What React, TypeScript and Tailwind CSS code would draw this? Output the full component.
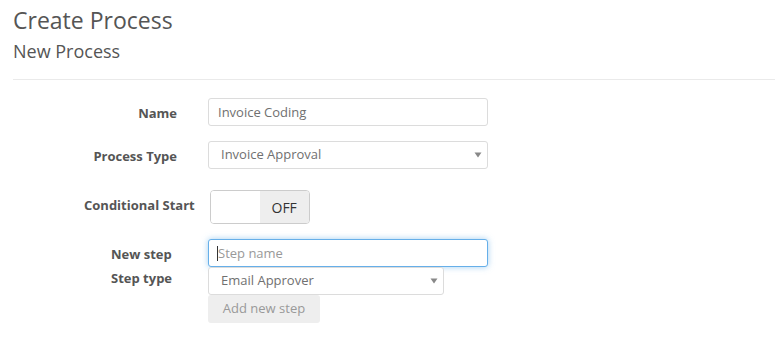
import type { ReactNode } from 'react';

function Caret() {
  return (
    <svg
      className="pointer-events-none absolute right-[6px] top-1/2 -translate-y-1/2"
      width="8"
      height="6"
      viewBox="0 0 8 6"
    >
      <path d="M0.5 0.5h7L4 5.5z" fill="#888" />
    </svg>
  );
}

function Select({ value, width }: { value: string; width: string }) {
  return (
    <div className={`relative ${width}`}>
      <select
        defaultValue={value}
        className="h-[28px] w-full appearance-none rounded-[3px] border border-[#dcdcdc] bg-white pl-[12px] pr-6 text-[13px] text-[#707070] outline-none"
      >
        <option>{value}</option>
      </select>
      <Caret />
    </div>
  );
}

function Row({ label, children, className = '' }: { label: ReactNode; children: ReactNode; className?: string }) {
  return (
    <div className={`flex items-center ${className}`}>
      <div className="w-[164px] pt-[3px] text-right text-[13px] font-bold text-[#555]">{label}</div>
      <div className="ml-[31px]">{children}</div>
    </div>
  );
}

export default function App() {
  return (
    <div className="min-h-[360px] bg-white pl-[13px] font-['Open_Sans',sans-serif] text-[#555]">
      <h1 className="pt-[6px] text-[23px] leading-[28px] text-[#555]">Create Process</h1>
      <h2 className="mt-[6px] text-[18px] leading-[22px] text-[#555]">New Process</h2>
      <div className="mt-[17px] border-t border-[#eaeaea]" />

      <div className="pt-[18px]">
        <Row label="Name">
          <input
            defaultValue="Invoice Coding"
            className="h-[28px] w-[280px] rounded-[3px] border border-[#dcdcdc] bg-white pl-[9px] text-[13px] text-[#707070] outline-none"
          />
        </Row>

        <Row label="Process Type" className="mt-[15px]">
          <Select value="Invoice Approval" width="w-[280px]" />
        </Row>

        <div className="mt-[21px] flex items-start">
          <div className="ml-[71px] pt-[6px] text-[13px] font-bold text-[#555]">Conditional Start</div>
          <div className="ml-[15px] flex h-[34px] w-[100px] overflow-hidden rounded-[4px] border border-[#ccc]">
            <div className="w-[49px] bg-white" />
            <div className="flex flex-1 items-center justify-center bg-[#eee] text-[14px] text-[#333]">OFF</div>
          </div>
        </div>

        <div className="mt-[15px] flex">
          <div className="ml-[98px] w-[97px] pt-[3px] text-[13px] font-bold leading-[24px] text-[#555]">
            <div>New step</div>
            <div>Step type</div>
          </div>
          <div className="flex flex-col items-start">
            <div className="relative">
              <input
                placeholder="Step name"
                className="h-[28px] w-[280px] rounded-[3px] border border-[#66afe9] bg-white pl-[9px] text-[13px] text-[#666] shadow-[0_0_6px_rgba(102,175,233,0.6)] outline-none placeholder:text-[#999]"
              />
              <span className="absolute left-[9px] top-[7px] h-[15px] w-px bg-[#333]" />
            </div>
            <Select value="Email Approver" width="w-[236px]" />
            <button className="h-[28px] w-[112px] rounded-[3px] bg-[#eee] text-[13px] text-[#999]">Add new step</button>
          </div>
        </div>
      </div>
    </div>
  );
}
